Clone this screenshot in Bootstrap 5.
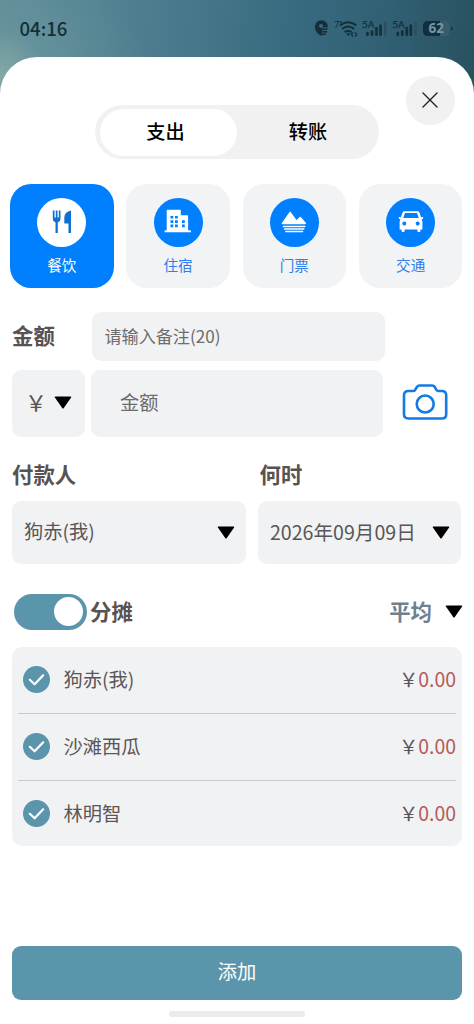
<!DOCTYPE html>
<html lang="zh-CN">
<head>
<meta charset="utf-8">
<meta name="viewport" content="width=device-width, initial-scale=1">
<title>添加支出</title>
<link rel="stylesheet" href="https://cdn.jsdelivr.net/npm/bootstrap@5.3.0/dist/css/bootstrap.min.css">
<style>
  body { font-family: "Noto Sans CJK SC", sans-serif; font-size: 19.3px; line-height: 1; color: #555; height: 1024px; overflow: hidden;
    background: radial-gradient(circle at 0 75px, #84a9a7 0, rgba(110,154,160,.6) 45px, rgba(80,128,145,0) 150px), linear-gradient(97deg, #588896 0, #4c7c8e 32%, #376a7f 62%, #326175 78%, #28515f 100%) 0 0/100% 110px no-repeat; }
  svg { display: block; flex: none; }
  .status { height: 57px; padding: 0 16px 1px 19.5px; color: #132f3a; }
  .clock { font-size: 18.6px; font-weight: 500; }
  .sheet { height: 967px; border-radius: 37px 37px 0 0; background: #fff; }
  .sheet-head { height: 126.5px; padding: 19px 19px 0 95px; }
  .seg { width: 284px; height: 54px; margin-top: 29px; padding: 3.5px 5px; border-radius: 27px; background: #f1f1f1; font-weight: 500; color: #000; font-size: 19.2px; }
  .seg > button { width: 137px; height: 47px; border: 0; border-radius: 24px; background: none; font-weight: 500; color: #000; padding: 0 0 0 5px; }
  .seg > .active { background: #fff; padding: 0 6px 0 0; }
  .close-btn { width: 49px; height: 49px; border: 0; border-radius: 50%; background: #f1f1f1; padding: 0 1px 1px 0; }
  .cats { padding: 0 11.5px 0 10px; }
  .tile { width: 103.7px; height: 104px; border: 0; border-radius: 21px; background: #f1f3f5; color: #2f80ed; font-size: 14.6px; padding: 14px 0 0; }
  .tile.active { background: #007fff; color: #fff; }
  .disc { width: 49px; height: 49px; border-radius: 50%; background: #007fff; color: #fff; }
  .tile.active .disc { background: #fff; color: #1070d0; }
  .tile-name { line-height: 20px; margin-top: 8px; }
  .ttl { font-size: 21.4px; font-weight: 700; color: #595252; }
  .field { background: #f1f2f4; border: 0; border-radius: 9px; color: #595656; }
  .hint { color: #6c6c6c; }
  .note-row { padding: 24.5px 0 0 12px; }
  .note-row > .ttl { padding-bottom: 3px; }
  .note { width: 293px; height: 48.5px; padding: 0 0 1px 12.5px; font-size: 17.1px; }
  .sum-row { padding: 9px 0 0 12px; }
  .cur { width: 73px; height: 67px; padding: 0 13.5px 1px 13px; }
  .cur > span { font-size: 22px; padding-bottom: 4px; }
  .amount { width: 292px; height: 67px; margin-left: 6px; padding: 0 0 1px 29px; }
  .pick-labels { height: 64px; padding: 11px 0 0 12px; }
  .picks { padding: 0 13px 0 12px; }
  .picker { height: 63px; padding: 0 11.5px 0 12px; }
  .split { height: 83px; padding: 13px 11.5px 0 14px; }
  .split > .ttl { padding-bottom: 2px; }
  .toggle { width: 73px; height: 36px; border-radius: 18px; background: #5b95ab; padding: 0 4px; }
  .knob { width: 29px; height: 29px; border-radius: 50%; background: #fff; }
  .share { margin-left: 3px; }
  .avg { color: #708090; margin-right: 12.5px; }
  .people { height: 199px; margin: 0 12px; padding: 0 6px; border-radius: 10px; background: #f1f2f4; }
  .person { height: 67px; padding: 0 0 0 4.5px; border-bottom: 1px solid #c9cacf; color: #5a5656; }
  .person:last-child { border: 0; padding-bottom: 1px; }
  .who { margin-left: 14px; }
  .money { font-size: 19.4px; color: #b35c5c; padding-bottom: 1px; }
  .add-btn { height: 54px; margin: 100px 12px 0; border: 0; border-radius: 9px; background: #5b95ab; color: #fff; padding: 0 0 1px; }
  .home { width: 136px; height: 6.5px; margin: 11px 0 0 169px; border-radius: 4px; background: #ebebeb; }
</style>
</head>
<body>
<svg width="0" height="0" class="position-absolute">
  <symbol id="tri" viewBox="0 0 18 13"><path d="M1.600.4h14.800q1.400 0 .7 1.100L9.800 12q-.8 1-1.600 0L.9 1.500Q.2.4 1.600.4z"/></symbol>
  <symbol id="tick" viewBox="0 0 27 27"><circle cx="13.5" cy="13.5" r="13.5" fill="#5b95ab"/><path d="M6.800 13.800l4.800 4.500 8.600-9" fill="none" stroke="#fff" stroke-width="2.200" stroke-linecap="round" stroke-linejoin="round"/></symbol>
</svg>
<header class="status d-flex align-items-center justify-content-between">
  <span class="clock">04:16</span>
  <svg width="144" height="26" viewBox="0 0 144 26" fill="#142f39" font-family="Lato, sans-serif" font-weight="700">
    <path d="M7.500 5.200a6.300 6.300 0 0 1 6.200 7.300H8.500v8.500c-4-.8-7.600-5-7.600-9.300A6.500 6.500 0 0 1 7.500 5.200z"/><circle cx="7" cy="11" r="2" fill="#37687b"/><path d="M8.500 14.200h5M8.500 16.700h4.700M9 19.200h3" stroke="#142f39" stroke-width="1.500"/>
    <text x="20" y="12.500" font-size="9.500" font-weight="400">7</text><circle cx="26.800" cy="7" r="1"/>
    <path d="M26 10.400q8.300-6.400 16.300 0M28.200 14q6-4.900 11.900 0M30.600 17.300q3.500-2.900 7 0" fill="none" stroke="#142f39" stroke-width="2"/><path d="M32.300 18.800q2-1.500 4 0L34.300 21z"/><path d="M39 17.500l-1.700 2 1.700 2M41 17.500l1.700 2-1.700 2" fill="none" stroke="#142f39" stroke-width="1.200"/>
    <g id="sig"><text x="48" y="12.500" font-size="10" font-weight="400" stroke="#142f39" stroke-width=".25">5A</text><path d="M53.500 18.200v1.500M58 16.500v3.200M62.500 13v6.700M66.500 10.500v9.200" stroke="#142f39" stroke-width="2.700" stroke-linecap="round"/><path d="M71.200 7.500v12.200" stroke="#2b5160" stroke-width="2.400" stroke-linecap="round"/></g>
    <use href="#sig" x="30.300"/>
    <rect x="109" y="6" width="26.500" height="15" rx="4.500" fill="#3b5d6b"/><path d="M113.500 6H126v15h-12.500a4.500 4.500 0 0 1-4.500-4.500v-6a4.500 4.500 0 0 1 4.500-4.500z"/><path d="M137 11.500q1.500 0 1.500 2t-1.500 2z"/>
    <text x="122.200" y="18.300" font-size="13.500" text-anchor="middle" fill="#6d98a8" font-family="Noto Sans, sans-serif">62</text>
  </svg>
</header>
<main class="sheet">
  <div class="sheet-head d-flex align-items-start justify-content-between">
    <div class="seg d-flex"><button class="active">支出</button><button>转账</button></div>
    <button class="close-btn d-flex align-items-center justify-content-center" aria-label="关闭"><svg width="16" height="16" viewBox="0 0 16 16"><path d="M1 1l14 14M15 1L1 15" stroke="#222" stroke-width="1.400" stroke-linecap="round"/></svg></button>
  </div>
  <nav class="cats d-flex justify-content-between">
    <button class="tile active d-flex flex-column align-items-center"><span class="disc d-flex align-items-center justify-content-center"><svg width="28" height="28" viewBox="0 0 28 28" fill="#1070d0"><path d="M4.800 2.500h1.700v7h1.300v-7h1.700v7h1.300v-7h1.700v8q0 3-2.700 3.800V25H7.500V14.300q-2.700-.8-2.700-3.800zM23 2.500V25h-2.500v-9.500h-4.200V9.500q.4-5.800 6.700-7z"/></svg></span><span class="tile-name">餐饮</span></button>
    <button class="tile d-flex flex-column align-items-center"><span class="disc d-flex align-items-center justify-content-center"><svg width="28" height="28" viewBox="0 0 28 28"><path d="M2.700 2.500q0-.8.800-.8h12.500q.8 0 .8.800v4.700h6.300q1 0 1 1v14h2q1 0 1 2H.4q0-2 1-2h1.300z" fill="#fff"/><path d="M6.500 8h2.800v2.600H6.500zM11 8h2.800v2.600H11zM6.500 12.300h2.800v2.600H6.500zM11 12.300h2.800v2.600H11zM18 12.300h2.800v2.600H18zM6.500 16.600h2.800v2.600H6.500zM11 16.600h2.800v2.600H11zM18 16.600h2.800v2.600H18z" fill="#007fff"/></svg></span><span class="tile-name">住宿</span></button>
    <button class="tile d-flex flex-column align-items-center"><span class="disc d-flex align-items-center justify-content-center"><svg width="28" height="28" viewBox="0 0 28 28" fill="#fff"><path d="M2.400 16.200Q1 16.200 2 14.700L9.500 4q.6-.8 1.200 0l5.800 8 3.300-3q.5-.5 1 0l5 5.700q1 1.500-.6 1.500z"/><path d="M3.500 18.500h21.300M4.500 21h19.300M5.800 23.500h16.700" fill="none" stroke="#fff" stroke-width="1.500" stroke-linecap="round"/></svg></span><span class="tile-name">门票</span></button>
    <button class="tile d-flex flex-column align-items-center"><span class="disc d-flex align-items-center justify-content-center"><svg width="28" height="28" viewBox="0 0 28 28"><path d="M7.300 3.300h13.400q1.300 0 1.700 1.200l1.800 5 .7-.5h1.300v1.600l-1.600.9q.8 1 .8 2.500v7.500h-2v1.600q0 .9-.9.900h-1.200q-.9 0-.9-.9v-1.600H7.600v1.600q0 .9-.9.900H5.500q-.9 0-.9-.9v-1.600h-2V14q0-1.500.8-2.500l-1.600-.9V9h1.300l.7.500 1.800-5Q6 3.300 7.300 3.300z" fill="#fff"/><path d="M8 5h12l1.800 5H6.200zM7.300 13.500a2 2 0 1 0 .01 0zM20.700 13.500a2 2 0 1 0 .01 0z" fill="#007fff"/></svg></span><span class="tile-name">交通</span></button>
  </nav>
  <div class="note-row d-flex align-items-center"><span class="ttl" style="width:80px">金额</span><div class="field hint note d-flex align-items-center">请输入备注(20)</div></div>
  <div class="sum-row d-flex align-items-center">
    <button class="field cur d-flex align-items-center justify-content-between"><span>￥</span><svg width="18" height="13"><use href="#tri"/></svg></button>
    <div class="field hint amount d-flex align-items-center">金额</div>
    <svg class="ms-auto me-4" width="48" height="40" viewBox="-.5 -.5 48 40" fill="none" stroke="#147be5" stroke-width="2.600" stroke-linejoin="round"><path d="M5.800 7.500H10.500q1.500 0 2.200-1.200l1.900-3Q15.400 2 16.800 2h13q1.500 0 2.300 1.300l1.800 3q.7 1.200 2.200 1.200h3.300q4.300 0 4.300 4.300v18.900q0 4.300-4.300 4.300H5.800q-4.300 0-4.300-4.300V11.800q0-4.300 4.300-4.300z"/><circle cx="22.700" cy="20.500" r="8.500"/></svg>
  </div>
  <div class="pick-labels d-flex align-items-center ttl"><span style="width:247.500px">付款人</span><span>何时</span></div>
  <div class="picks d-flex justify-content-between">
    <button class="field picker d-flex align-items-center justify-content-between" style="width:234px">狗赤(我)<svg width="18" height="13"><use href="#tri"/></svg></button>
    <button class="field picker d-flex align-items-center justify-content-between" style="width:203px"><span style="font-size:19.600px">2026年09月09日</span><svg width="18" height="13"><use href="#tri"/></svg></button>
  </div>
  <div class="split d-flex align-items-center">
    <div class="toggle d-flex align-items-center justify-content-end" role="switch" aria-checked="true"><span class="knob"></span></div>
    <span class="ttl share">分摊</span>
    <span class="ttl avg ms-auto">平均</span><svg width="18" height="13"><use href="#tri"/></svg>
  </div>
  <div class="people">
    <div class="person d-flex align-items-center"><svg width="27" height="27"><use href="#tick"/></svg><span class="who">狗赤(我)</span><span class="ms-auto">￥</span><span class="money">0.00</span></div>
    <div class="person d-flex align-items-center"><svg width="27" height="27"><use href="#tick"/></svg><span class="who">沙滩西瓜</span><span class="ms-auto">￥</span><span class="money">0.00</span></div>
    <div class="person d-flex align-items-center"><svg width="27" height="27"><use href="#tick"/></svg><span class="who">林明智</span><span class="ms-auto">￥</span><span class="money">0.00</span></div>
  </div>
  <div class="d-grid"><button class="add-btn">添加</button></div>
  <div class="home"></div>
</main>
<script src="https://cdn.jsdelivr.net/npm/bootstrap@5.3.0/dist/js/bootstrap.bundle.min.js"></script>
</body>
</html>
